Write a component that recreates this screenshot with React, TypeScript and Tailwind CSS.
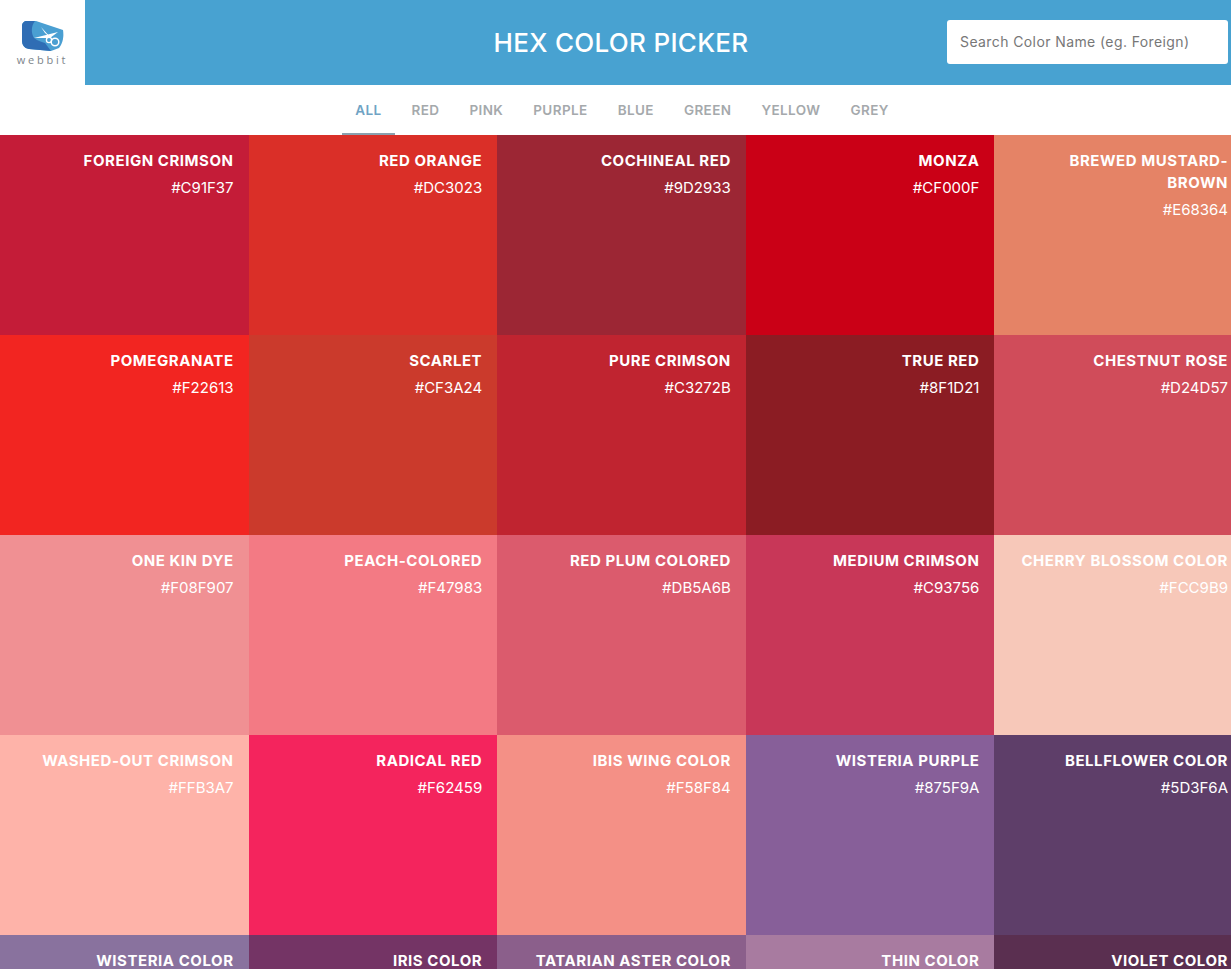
const tabs = ["ALL", "RED", "PINK", "PURPLE", "BLUE", "GREEN", "YELLOW", "GREY"];

const colors = [
  { name: "FOREIGN CRIMSON", hex: "#C91F37", bg: "bg-[#C41C38]" },
  { name: "RED ORANGE", hex: "#DC3023", bg: "bg-[#DA2F28]" },
  { name: "COCHINEAL RED", hex: "#9D2933", bg: "bg-[#9C2634]" },
  { name: "MONZA", hex: "#CF000F", bg: "bg-[#CA0016]" },
  { name: "BREWED MUSTARD-BROWN", hex: "#E68364", bg: "bg-[#E58366]" },
  { name: "POMEGRANATE", hex: "#F22613", bg: "bg-[#F22521]" },
  { name: "SCARLET", hex: "#CF3A24", bg: "bg-[#CB3A2C]" },
  { name: "PURE CRIMSON", hex: "#C3272B", bg: "bg-[#C02430]" },
  { name: "TRUE RED", hex: "#8F1D21", bg: "bg-[#8B1C23]" },
  { name: "CHESTNUT ROSE", hex: "#D24D57", bg: "bg-[#D04C5A]" },
  { name: "ONE KIN DYE", hex: "#F08F907", bg: "bg-[#F09093]" },
  { name: "PEACH-COLORED", hex: "#F47983", bg: "bg-[#F37A84]" },
  { name: "RED PLUM COLORED", hex: "#DB5A6B", bg: "bg-[#DB5B6D]" },
  { name: "MEDIUM CRIMSON", hex: "#C93756", bg: "bg-[#C83758]" },
  { name: "CHERRY BLOSSOM COLOR", hex: "#FCC9B9", bg: "bg-[#F7C8B9]" },
  { name: "WASHED-OUT CRIMSON", hex: "#FFB3A7", bg: "bg-[#FEB3A9]" },
  { name: "RADICAL RED", hex: "#F62459", bg: "bg-[#F4245D]" },
  { name: "IBIS WING COLOR", hex: "#F58F84", bg: "bg-[#F49086]" },
  { name: "WISTERIA PURPLE", hex: "#875F9A", bg: "bg-[#875F99]" },
  { name: "BELLFLOWER COLOR", hex: "#5D3F6A", bg: "bg-[#5E3E69]" },
  { name: "WISTERIA COLOR", hex: "#89729E", bg: "bg-[#89729E]" },
  { name: "IRIS COLOR", hex: "#763568", bg: "bg-[#743465]" },
  { name: "TATARIAN ASTER COLOR", hex: "#8D608C", bg: "bg-[#8B5F8B]" },
  { name: "THIN COLOR", hex: "#A87CA0", bg: "bg-[#A87BA0]" },
  { name: "VIOLET COLOR", hex: "#5B3256", bg: "bg-[#5A2F50]" },
];

function Logo() {
  return (
    <svg viewBox="0 0 44 32" className="w-[44px] h-[32px]">
      <path d="M6 1 L15 1 L42 10 C43 16 42 23 38 28 L30 31 L8 29 C3 28 1 25 1 20 L1 6 C1 3 3 1 6 1 Z" fill="#4A9FD2" />
      <path d="M6 1 L14 1 C10 6 10 13 13 18 C17 21 21 22 24 23 L30 31 L8 29 C3 28 1 25 1 20 L1 6 C1 3 3 1 6 1 Z" fill="#2F6DB4" />
      <path d="M20 7 L30 18 L24 13 Z M13 18 L37 12 L29 18 Z" fill="#fff" />
      <circle cx="34" cy="22" r="3.8" stroke="#fff" strokeWidth="1.5" fill="none" />
      <circle cx="28" cy="20" r="2.6" stroke="#fff" strokeWidth="1.3" fill="none" />
    </svg>
  );
}

export default function App() {
  return (
    <div className="h-screen overflow-hidden bg-white font-['Inter','Liberation_Sans',sans-serif]">
      <header className="h-[85px] flex bg-[#48A2D1]">
        <div className="w-[85px] h-full bg-white flex flex-col items-center pt-[20px]">
          <Logo />
          <span className="mt-[1px] text-[11px] leading-[13px] tracking-[2.8px] text-[#7d858b] font-['Open_Sans',sans-serif]">webbit</span>
        </div>
        <h1 className="flex-1 pl-[210px] text-center text-white text-[26px] leading-[85px] tracking-[0.3px] font-medium">HEX COLOR PICKER</h1>
        <div className="pt-[20px] pr-[3px]">
          <input
            readOnly
            placeholder="Search Color Name (eg. Foreign)"
            className="w-[281px] h-[44px] rounded-[3px] bg-white pl-[13px] pb-[2px] text-[14px] tracking-[0.4px] text-[#555] placeholder:text-[#777] outline-none"
          />
        </div>
      </header>

      <nav className="h-[50px] flex justify-center items-stretch pl-[13px]">
        {tabs.map((tab, i) => (
          <a
            key={tab}
            className={
              i === 0
                ? "mx-[2px] px-[13px] leading-[50px] text-[13.5px] tracking-[0.4px] font-semibold text-[#6FA3C4] border-b-2 border-[#8AA0AE]"
                : "mx-[2px] px-[13px] leading-[50px] text-[13.5px] tracking-[0.4px] font-semibold text-[#A5A9AC]"
            }
          >
            {tab}
          </a>
        ))}
      </nav>

      <div className="w-[1243px] grid grid-cols-5 auto-rows-[200px]">
        {colors.map((c) => (
          <div key={c.name} className={`${c.bg} pl-[16px] pr-[15px] pt-[15px] text-right text-white`}>
            <div className="text-[15px] leading-[22px] tracking-[0.55px] font-bold">{c.name}</div>
            <div className="mt-[5px] text-[15px] leading-[22px] font-normal">{c.hex}</div>
          </div>
        ))}
      </div>
    </div>
  );
}
